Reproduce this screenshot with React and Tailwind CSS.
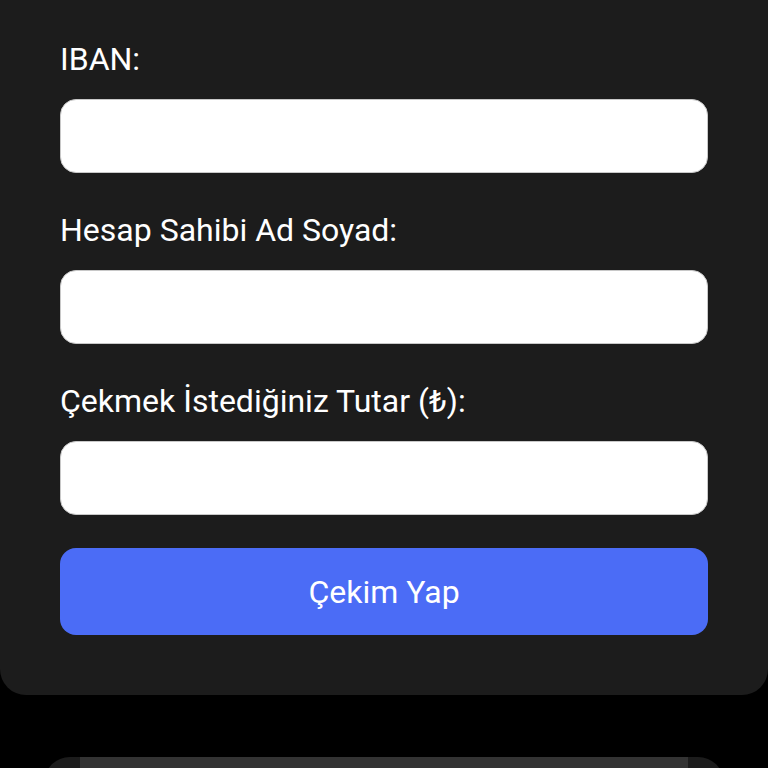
export default function App() {
  const fields = [
    { id: "iban", label: "IBAN:" },
    { id: "name", label: "Hesap Sahibi Ad Soyad:" },
    { id: "amount", label: "Çekmek İstediğiniz Tutar (₺):" },
  ];

  return (
    <div
      className="min-h-screen bg-black overflow-hidden"
      style={{ fontFamily: "Roboto, 'Noto Sans', sans-serif" }}
    >
      {/* WITHDRAW FORM */}
      <div className="bg-[#1c1c1c] rounded-b-[26px] px-[60px] pt-[35px] pb-[60px]">
        {fields.map((f, i) => (
          <div key={f.id} className={i > 0 ? "mt-[33px]" : ""}>
            <label className="block text-[32px] leading-[48px] text-white">
              {f.label}
            </label>
            <input
              type="text"
              className="mt-[16px] block w-full h-[74px] rounded-[16px] bg-white border border-[#c8c8c8] outline-none"
            />
          </div>
        ))}

        <button className="mt-[33px] w-full h-[87px] rounded-[16px] bg-[#4b6cf6] text-white text-[32px]">
          Çekim Yap
        </button>
      </div>

      {/* NEXT CARD (cut off) */}
      <div className="mt-[62px] mx-[44px] bg-[#1c1c1c] rounded-t-[26px] px-[36px] h-[40px]">
        <div className="h-full bg-[#333333]" />
      </div>
    </div>
  );
}
